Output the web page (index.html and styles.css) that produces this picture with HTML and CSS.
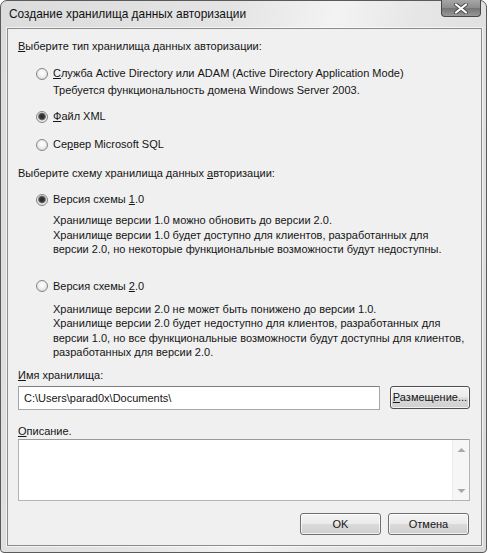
FILE: index.html
```html
<!DOCTYPE html>
<html lang="ru">
<head>
  <meta charset="UTF-8" />
  <title>Создание хранилища данных авторизации</title>
  <link rel="stylesheet" href="styles.css">
</head>
<body>

  <div class="window">
    <div class="titlebar">
      <span class="title">Создание хранилища данных авторизации</span>
      <div class="close">
        <svg width="16" height="11" viewBox="0 0 16 11">
          <path d="M3 1.5 L13 9.5 M13 1.5 L3 9.5" stroke="#4a4a4a" stroke-width="4" stroke-linecap="round"/>
          <path d="M3 1.5 L13 9.5 M13 1.5 L3 9.5" stroke="#ffffff" stroke-width="2.2" stroke-linecap="round"/>
        </svg>
      </div>
    </div>

    <div class="client">
      <div class="heading"><u>В</u>ыберите тип хранилища данных авторизации:</div>

      <div class="option first"><span class="radio"></span><span><u>С</u>лужба Active Directory или ADAM (Active Directory Application Mode)</span></div>
      <div class="note">Требуется функциональность домена Windows Server 2003.</div>

      <div class="option xml"><span class="radio checked"></span><span><u>Ф</u>айл XML</span></div>
      <div class="option sql"><span class="radio"></span><span>Се<u>р</u>вер Microsoft SQL</span></div>

      <div class="heading second">Выберите схему хранилища данных <u>а</u>вторизации:</div>

      <div class="option v1"><span class="radio checked"></span><span>Версия схемы <u>1</u>.0</span></div>
      <div class="desc first-desc">
        Хранилище версии 1.0 можно обновить до версии 2.0.<br>
        Хранилище версии 1.0 будет доступно для клиентов, разработанных для<br>
        версии 2.0, но некоторые функциональные возможности будут недоступны.
      </div>

      <div class="option v2"><span class="radio"></span><span>Версия схемы <u>2</u>.0</span></div>
      <div class="desc second-desc">
        Хранилище версии 2.0 не может быть понижено до версии 1.0.<br>
        Хранилище версии 2.0 будет недоступно для клиентов, разработанных для<br>
        версии 1.0, но все функциональные возможности будут доступны для клиентов,<br>
        разработанных для версии 2.0.
      </div>

      <div class="field-label"><u>И</u>мя хранилища:</div>
      <div class="path-row">
        <div class="input">C:\Users\parad0x\Documents\</div>
        <div class="btn browse"><u>Р</u>азмещение...</div>
      </div>

      <div class="field-label desc-label"><u>О</u>писание.</div>
      <div class="textarea">
        <div class="text-body"></div>
        <div class="scrollbar">
          <svg width="9" height="6" viewBox="0 0 9 6"><polygon points="0.5,5 4.5,1 8.5,5" fill="#a8a8a8"/></svg>
          <svg width="9" height="6" viewBox="0 0 9 6"><polygon points="0.5,1 4.5,5 8.5,1" fill="#a8a8a8"/></svg>
        </div>
      </div>

      <div class="buttons">
        <div class="btn">OK</div>
        <div class="btn">Отмена</div>
      </div>
    </div>
  </div>

</body>
</html>
```

FILE: styles.css
```css
body {
  margin: 0;
  font-family: "Liberation Sans", Arial, sans-serif;
  font-size: 11px;
  color: #151515;
  background-color: #ffffff;
}
.window {
  width: 487px;
  height: 553px;
  box-sizing: border-box;
  border: 1px solid #5a5a5a;
  border-radius: 7px 7px 4px 4px;
  padding: 0 4px 6px 6px;
  display: flex;
  flex-direction: column;
  background: linear-gradient(100deg, #dcdcdc 0%, #e4e4e4 40%, #f3f3f3 58%, #e6e6e6 72%, #d9d9d9 100%);
}
.titlebar {
  height: 27px;
  display: flex;
  justify-content: space-between;
  align-items: flex-start;
  padding-left: 2px;
}
.title {
  font-size: 11.9px;
  line-height: 27px;
  color: #111;
}
.close {
  width: 40px;
  height: 17px;
  box-sizing: border-box;
  margin-top: -1px;
  margin-right: 1px;
  border: 1px solid #474747;
  border-top: none;
  border-radius: 0 0 4px 4px;
  background: linear-gradient(#a6a6a6, #8c8c8c 50%, #747474 52%, #989898);
  display: flex;
  align-items: center;
  justify-content: center;
}
.client {
  flex: 1;
  border: 1px solid #8c8c8c;
  box-shadow: 0 0 0 1px rgba(255,255,255,0.6);
  background-color: #f0f0f0;
  padding: 10px 11px 0 10px;
  line-height: 15px;
}
.heading.second {
  margin-top: 14px;
}
.option {
  display: flex;
  align-items: center;
  gap: 5px;
  padding-left: 18px;
  height: 15px;
}
.option.first { margin-top: 12px; }
.option.xml { margin-top: 11px; }
.option.sql { margin-top: 13px; }
.option.v1 { margin-top: 11px; }
.option.v2 { margin-top: 22px; }
.radio {
  width: 12px;
  height: 12px;
  box-sizing: border-box;
  border-radius: 50%;
  border: 1px solid #858585;
  background: radial-gradient(circle at 50% 40%, #ffffff 0%, #f2f2f2 40%, #cfcfcf 100%);
  flex-shrink: 0;
}
.radio.checked {
  background: radial-gradient(circle at 50% 45%, #222 0%, #3e3e3e 34%, #808080 48%, #eeeeee 58%, #d0d0d0 100%);
}
.note {
  padding-left: 35px;
  margin-top: 2px;
}
.desc {
  padding-left: 35px;
  line-height: 14.5px;
  white-space: nowrap;
}
.first-desc { margin-top: 6px; }
.second-desc { margin-top: 8px; }
.field-label {
  margin-top: 8px;
}
.field-label.desc-label {
  margin-top: 14px;
}
.path-row {
  display: flex;
  gap: 10px;
  margin-top: 3px;
  width: 452px;
}
.input {
  flex: 1;
  height: 24px;
  box-sizing: border-box;
  border: 1px solid #a6a6a6;
  border-top-color: #7e7e7e;
  background-color: #ffffff;
  padding-left: 5px;
  line-height: 22px;
}
.btn {
  width: 81px;
  height: 23px;
  box-sizing: border-box;
  border: 1px solid #707070;
  border-radius: 3px;
  background: linear-gradient(#f4f4f4, #ebebeb 48%, #dadada 52%, #cfcfcf);
  box-shadow: inset 0 0 0 1px rgba(255,255,255,0.7);
  text-align: center;
  line-height: 21px;
}
.btn.browse {
  width: 80px;
  border-color: #4e4e4e;
}
.textarea {
  display: flex;
  width: 452px;
  height: 62px;
  box-sizing: border-box;
  border: 1px solid #b4b4b4;
  border-top-color: #9a9a9a;
  background-color: #ffffff;
}
.text-body {
  flex: 1;
}
.scrollbar {
  width: 16px;
  background-color: #f6f6f6;
  border-left: 1px solid #ececec;
  display: flex;
  flex-direction: column;
  justify-content: space-between;
  align-items: center;
  padding: 7px 0 6px;
}
.buttons {
  display: flex;
  justify-content: flex-end;
  gap: 7px;
  width: 451px;
  margin-top: 12px;
}
.buttons .btn {
  height: 22px;
  line-height: 20px;
}
```
